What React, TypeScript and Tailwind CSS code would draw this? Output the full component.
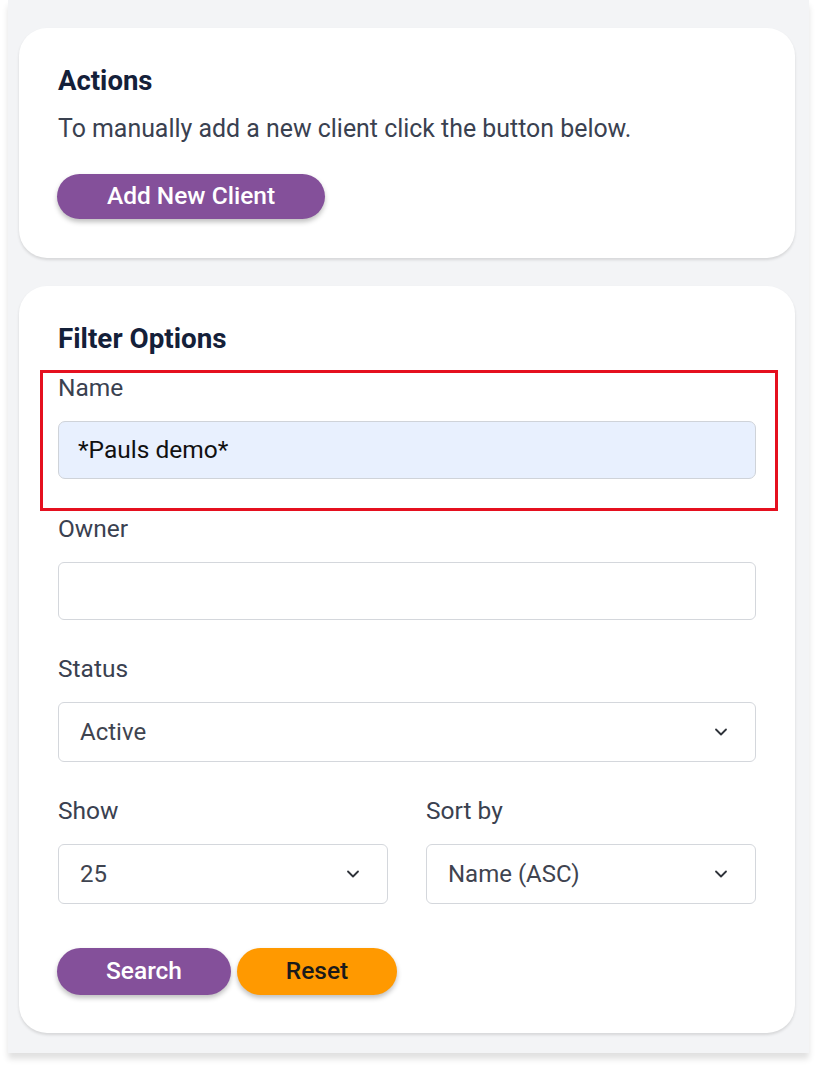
import { ChevronDown } from "lucide-react";

function Label({ children }: { children: React.ReactNode }) {
  return <label className="block text-[24.5px] leading-[28px] text-[#3a4150] mb-[19px]">{children}</label>;
}

function SelectBox({ value }: { value: string }) {
  return (
    <div className="h-[60px] flex items-center justify-between pl-[21px] pr-[24px] border border-[#d4d7dc] rounded-[6px] bg-white">
      <span className="text-[24px] text-[#3f4450]">{value}</span>
      <ChevronDown className="w-[20px] h-[20px] text-[#2f333a]" strokeWidth={2.2} />
    </div>
  );
}

export default function App() {
  return (
    <div className="bg-white min-h-[1070px] font-['Roboto',sans-serif]">
      <div className="ml-[8px] w-[801px] bg-[#f3f4f6] pt-[28px] pb-[20px] pl-[11px] pr-[14px] shadow-[0_6px_6px_rgba(0,0,0,0.12)] flex flex-col gap-[28px]">
        <div className="bg-white rounded-[28px] shadow-[0_2px_3px_rgba(0,0,0,0.12)] pt-[37px] pb-[39px] px-[39px]">
          <h2 className="text-[27.5px] leading-[32px] font-bold text-[#142039]">Actions</h2>
          <p className="mt-[18px] text-[24.9px] leading-[28px] text-[#3a4150]">
            To manually add a new client click the button below.
          </p>
          <button className="mt-[31px] h-[45px] w-[268px] -ml-[1px] rounded-full bg-[#84509a] text-white text-[24.5px] font-medium shadow-[0_3px_5px_rgba(0,0,0,0.25)]">
            Add New Client
          </button>
        </div>

        <div className="bg-white rounded-[28px] shadow-[0_2px_3px_rgba(0,0,0,0.12)] pt-[37px] pb-[38px] px-[39px]">
          <h2 className="text-[27.8px] leading-[32px] font-bold text-[#142039] mb-[19px]">Filter Options</h2>

          <div className="relative mb-[36px]">
            <div className="absolute -left-[18px] -right-[22px] -top-[4px] -bottom-[32px] border-[3px] border-[#e5101f] pointer-events-none" />
            <Label>Name</Label>
            <div className="h-[58px] flex items-center px-[19px] border border-[#cfd3d9] rounded-[7px] bg-[#e8f0fe]">
              <span className="text-[24.5px] text-[#111]">*Pauls demo*</span>
            </div>
          </div>

          <div className="mb-[35px]">
            <Label>Owner</Label>
            <div className="h-[58px] border border-[#d4d7dc] rounded-[6px] bg-white" />
          </div>

          <div className="mb-[35px]">
            <Label>Status</Label>
            <SelectBox value="Active" />
          </div>

          <div className="grid grid-cols-2 gap-[38px] mb-[44px]">
            <div>
              <Label>Show</Label>
              <SelectBox value="25" />
            </div>
            <div>
              <Label>Sort by</Label>
              <SelectBox value="Name (ASC)" />
            </div>
          </div>

          <div className="flex gap-[6px] -ml-[1px]">
            <button className="h-[47px] w-[174px] rounded-full bg-[#84509a] text-white text-[24.5px] font-medium shadow-[0_3px_5px_rgba(0,0,0,0.25)]">
              Search
            </button>
            <button className="h-[47px] w-[160px] rounded-full bg-[#ff9900] text-[#1a1a1a] text-[24.5px] font-medium shadow-[0_3px_5px_rgba(0,0,0,0.25)]">
              Reset
            </button>
          </div>
        </div>
      </div>
    </div>
  );
}
